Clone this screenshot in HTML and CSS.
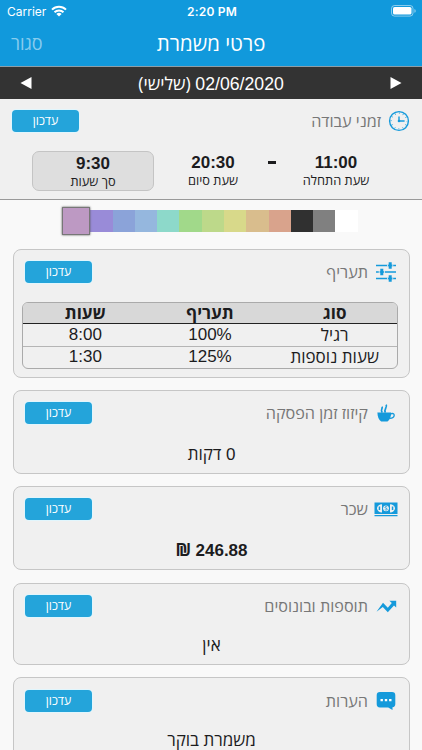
FILE: index.html
```html
<!DOCTYPE html>
<html lang="he" dir="rtl">
<head>
    <meta charset="UTF-8">
    <meta name="viewport" content="width=device-width, initial-scale=1.0">
    <title>פרטי משמרת</title>
    <link rel="stylesheet" href="styles.css">
</head>
<body>

    <header class="header">
        <div class="status-bar" dir="ltr">
            <div class="carrier">
                <span>Carrier</span>
                <svg class="wifi" viewBox="0 0 16 12">
                    <path d="M1 4.6a10 10 0 0 1 14 0M3.5 7.3a6.4 6.4 0 0 1 9 0" fill="none" stroke="#fff" stroke-width="2"/>
                    <path d="M5.4 9a3.7 3.7 0 0 1 5.2 0L8 11.6z" fill="#fff"/>
                </svg>
            </div>
            <span class="clock">2:20 PM</span>
            <svg class="battery" viewBox="0 0 26 12">
                <rect x="0.5" y="0.5" width="21.5" height="10.6" rx="3" fill="none" stroke="#fff" stroke-opacity="0.5"/>
                <rect x="2" y="2" width="18.5" height="7.6" rx="1.6" fill="#fff"/>
                <path d="M23.4 4a2 2 0 0 1 0 3.8z" fill="#fff" fill-opacity="0.5"/>
            </svg>
        </div>
        <div class="title-bar">
            <h1>פרטי משמרת</h1>
            <span class="close">סגור</span>
        </div>
    </header>

    <div class="date-bar">
        <svg class="arrow" viewBox="0 0 11 12"><path d="M0 0l11 6-11 6z" fill="#fff"/></svg>
        <p><span class="num">02/06/2020</span> (שלישי)</p>
        <svg class="arrow" viewBox="0 0 11 12"><path d="M11 0L0 6l11 6z" fill="#fff"/></svg>
    </div>

    <section class="work-times">
        <div class="card-head">
            <svg class="icon" viewBox="0 0 24 24">
                <circle cx="12" cy="12" r="9.4" fill="none" stroke="#159adb" stroke-width="1.4"/>
                <circle cx="12" cy="12" r="7.8" fill="none" stroke="#159adb" stroke-width="1.5" stroke-dasharray="0.6 3.484" stroke-dashoffset="0.3"/>
                <path d="M12 7.5V12h5.6" fill="none" stroke="#159adb" stroke-width="1.4"/>
                <circle cx="12" cy="12" r="1.3" fill="#159adb"/>
            </svg>
            <h2>זמני עבודה</h2>
            <button>עדכון</button>
        </div>
        <div class="times">
            <div class="time">
                <strong>11:00</strong>
                <span>שעת התחלה</span>
            </div>
            <div class="dash"></div>
            <div class="time end">
                <strong>20:30</strong>
                <span>שעת סיום</span>
            </div>
            <div class="time total">
                <strong>9:30</strong>
                <span>סך שעות</span>
            </div>
        </div>
    </section>

    <div class="palette" dir="ltr">
        <div class="swatch mauve selected"></div>
        <div class="swatch purple"></div>
        <div class="swatch blue"></div>
        <div class="swatch sky"></div>
        <div class="swatch mint"></div>
        <div class="swatch green"></div>
        <div class="swatch lime"></div>
        <div class="swatch yellow"></div>
        <div class="swatch tan"></div>
        <div class="swatch salmon"></div>
        <div class="swatch black"></div>
        <div class="swatch gray"></div>
        <div class="swatch white"></div>
    </div>

    <main class="cards">
        <section class="card rate">
            <div class="card-head">
                <svg class="icon" viewBox="0 0 24 24">
                    <path d="M2 5.5h20M2 12h20M2 18.5h20" stroke="#159adb" stroke-width="1.4"/>
                    <path d="M13.2 5.5h6M4.8 12h6M13.2 18.5h6" stroke="#f0f0f0" stroke-width="2"/>
                    <path d="M16.2 2.2v6.6M7.8 8.7v6.6M16.2 15.2v6.6" stroke="#159adb" stroke-width="3"/>
                    <path d="M14 5.5h4.4M5.6 12H10M14 18.5h4.4" stroke="#159adb" stroke-width="1.4"/>
                </svg>
                <h2>תעריף</h2>
                <button>עדכון</button>
            </div>
            <div class="table">
                <div class="row table-head">
                    <span>סוג</span>
                    <span>תעריף</span>
                    <span>שעות</span>
                </div>
                <div class="row">
                    <span>רגיל</span>
                    <span class="num" dir="ltr">100%</span>
                    <span class="num">8:00</span>
                </div>
                <div class="row">
                    <span>שעות נוספות</span>
                    <span class="num" dir="ltr">125%</span>
                    <span class="num">1:30</span>
                </div>
            </div>
        </section>

        <section class="card break">
            <div class="card-head">
                <svg class="icon" viewBox="0 0 24 24">
                    <path d="M3.4 11.4h13.800c0 4-1.400 7.300-3.700 9.100H7.200c-2.400-1.800-3.800-5.100-3.800-9.100z" fill="#159adb"/>
                    <path d="M16.600 13c2-1 3.800-.4 3.600 1.400-.2 1.800-2.300 3-4.800 2.900" fill="none" stroke="#159adb" stroke-width="1.300"/>
                    <path d="M8.300 11.600C5.700 9 9.200 8 8 5.700M11.400 11.600c-2.200-3.300 2.300-4.600.8-8" fill="none" stroke="#159adb" stroke-width="1.700"/>
                </svg>
                <h2>קיזוז זמן הפסקה</h2>
                <button>עדכון</button>
            </div>
            <p class="value"><span class="num">0</span> דקות</p>
        </section>

        <section class="card salary">
            <div class="card-head">
                <svg class="icon" viewBox="0 0 24 24">
                    <path d="M.5 5.400h23V17H.5zM.5 18h23v1.300H.5z" fill="#159adb"/>
                    <path d="M8 7.200a5 4.100 0 1 0 0 8.200zM16 7.200a5 4.100 0 1 1 0 8.200z" fill="#f0f0f0"/>
                    <path d="M4.700 9.500h1.500v3.600H4.700zM17.800 9.500h1.500v3.600h-1.500z" fill="#159adb"/>
                    <circle cx="12" cy="11.300" r="2.900" fill="#f0f0f0"/>
                    <path d="M13.200 9.900c-.7-.5-2.300-.5-2.300.4 0 1.200 2.400.6 2.400 1.900 0 1-1.700 1-2.500.4" fill="none" stroke="#159adb" stroke-width=".9"/>
                </svg>
                <h2>שכר</h2>
                <button>עדכון</button>
            </div>
            <p class="value bold"><span class="num">246.88</span> <span class="shekel">₪</span></p>
        </section>

        <section class="card bonus">
            <div class="card-head">
                <svg class="icon" viewBox="0 0 24 24">
                    <path d="M2.500 17.700L9 8.700l4.800 5 4-4.600-2.400-2.300h6.800v6.700l-2.200-2.100-6.200 6.900-5-5.300z" fill="#159adb"/>
                </svg>
                <h2>תוספות ובונוסים</h2>
                <button>עדכון</button>
            </div>
            <p class="value">אין</p>
        </section>

        <section class="card notes">
            <div class="card-head">
                <svg class="icon" viewBox="0 0 24 24">
                    <path d="M6 3h12a3.300 3.300 0 0 1 3.300 3.300V15a3.300 3.300 0 0 1-2.800 3.300V21l-4.300-2.600H6A3.300 3.300 0 0 1 2.700 15V6.300A3.300 3.300 0 0 1 6 3z" fill="#159adb"/>
                    <path d="M6.500 9.900h2.400v2.400H6.500zM10.800 9.900h2.400v2.400h-2.400zM15.100 9.900h2.400v2.400h-2.400z" fill="#fff"/>
                </svg>
                <h2>הערות</h2>
                <button>עדכון</button>
            </div>
            <p class="value">משמרת בוקר</p>
        </section>
    </main>

</body>
</html>
```

FILE: styles.css
```css
*,
::after,
::before {
    margin: 0;
    padding: 0;
    box-sizing: border-box;
}

body {
    background-color: #f9f9f9;
    color: #1c1c1e;
    font-family: "Open Sans", "Liberation Sans", sans-serif;
    font-size: 17px;
    height: 750px;
    overflow: hidden;
}

svg {
    display: block;
    flex: none;
}

.num {
    font-family: "Liberation Sans", sans-serif;
}

.header {
    background-color: #1199dc;
    color: #fff;
    height: 67px;
    border-bottom: 1px solid #8d9ea8;
}

.status-bar {
    display: grid;
    grid-template-columns: 1fr auto 1fr;
    align-items: center;
    height: 22px;
    padding: 0 5px 0 7px;
    font-family: Inter, sans-serif;
    font-size: 12px;
}

.carrier {
    display: flex;
    align-items: center;
    gap: 5px;
}

.wifi {
    width: 16px;
    height: 12px;
}

.clock {
    font-weight: 600;
    letter-spacing: 0.2px;
}

.battery {
    width: 26px;
    height: 12px;
    justify-self: end;
}

.title-bar {
    display: grid;
    grid-template-columns: 1fr auto 1fr;
    align-items: center;
    height: 42px;
    padding: 0 11px;
}

.title-bar h1 {
    grid-column: 2;
    font-size: 20.5px;
    font-weight: 400;
}

.close {
    justify-self: end;
    font-size: 18px;
    color: #88ccee;
}

.date-bar {
    display: flex;
    align-items: center;
    justify-content: space-between;
    height: 32px;
    padding: 0 20px;
    background-color: #333;
    color: #fff;
    font-size: 17.7px;
}

.arrow {
    width: 12px;
    height: 12px;
}

.work-times {
    height: 101px;
    padding: 11px 11px 0 12px;
    background-color: #f0f0f0;
    border-bottom: 1px solid #999;
}

.card-head {
    display: flex;
    align-items: center;
    height: 22px;
}

.icon {
    width: 24px;
    height: 24px;
}

.card-head h2 {
    margin: 0 6px 0 auto;
    font-size: 16.2px;
    font-weight: 400;
    line-height: 22px;
    color: #777;
}

button {
    width: 67px;
    height: 22px;
    border: none;
    border-radius: 4px;
    background-color: #24a4da;
    box-shadow: 0 0 0 1px #e1f6fd;
    color: #fff;
    font-family: "Open Sans", sans-serif;
    font-size: 12.3px;
    line-height: 20px;
}

.times {
    display: flex;
    margin-top: 19px;
    padding-right: 18px;
}

.time {
    width: 114px;
    height: 40px;
    display: flex;
    flex-direction: column;
    align-items: center;
    padding-top: 3px;
    font-size: 12.8px;
    line-height: 16px;
}

.time strong {
    font-family: "Liberation Sans", sans-serif;
    font-size: 17px;
    line-height: 18px;
}

.dash {
    width: 8px;
    height: 3px;
    margin: 10px 3px 0 0;
    background-color: #1c1c1e;
}

.end {
    width: 110px;
}

.total {
    width: 122px;
    margin-right: 4px;
    border: 1px solid #c4c4c4;
    border-radius: 7px;
    background-color: #dedede;
}

.palette {
    display: flex;
    align-items: center;
    justify-content: center;
    height: 42px;
    padding-right: 2px;
}

.swatch {
    width: 22.3px;
    height: 22px;
}

.selected {
    width: 28px;
    height: 28px;
    border: 1px solid #777;
    box-shadow: 0 0 2px #555;
    z-index: 1;
}

.mauve { background-color: #bd99c3; }
.purple { background-color: #998bd8; }
.blue { background-color: #8ba3d9; }
.sky { background-color: #95b7de; }
.mint { background-color: #8dd9ca; }
.green { background-color: #a1d98a; }
.lime { background-color: #bdd98a; }
.yellow { background-color: #d8d98a; }
.tan { background-color: #d9bd8d; }
.salmon { background-color: #d9a38c; }
.black { background-color: #303030; }
.gray { background-color: #808080; }
.white { background-color: #fff; }

.cards {
    display: flex;
    flex-direction: column;
    gap: 12px;
    padding: 7px 12px 0 13px;
}

.card {
    flex: none;
    height: 84px;
    padding: 11px 11px 0;
    border: 1px solid #c6c6c6;
    border-radius: 8px;
    background-color: #f0f0f0;
}

.rate {
    height: 129px;
}

.bonus {
    height: 82px;
    margin-top: 1px;
}

.notes {
    padding-top: 12px;
}

.value {
    margin-top: 20px;
    line-height: 20px;
    text-align: center;
}

.bonus .value,
.notes .value {
    margin-top: 18px;
}

.bold {
    font-weight: 700;
}

.table {
    margin: 19px 0 0 -3px;
    border: 1px solid #aaa;
    border-radius: 6px;
    overflow: hidden;
}

.row {
    display: flex;
    height: 22px;
    line-height: 21px;
    text-align: center;
}

.row span {
    flex: 1;
}

.row + .row + .row {
    border-top: 1px solid #b5b5b5;
    line-height: 20px;
}

.table-head {
    height: 21px;
    background-color: #d8d8d8;
    border-bottom: 1px solid #222;
    font-weight: 700;
    line-height: 19px;
}
```
